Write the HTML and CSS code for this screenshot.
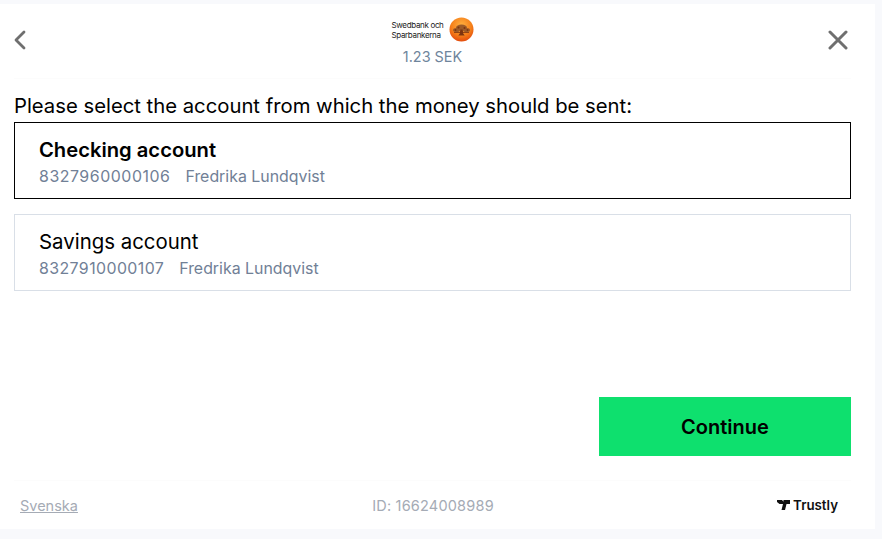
FILE: index.html
```html
<!DOCTYPE html>
<html lang="en">
<head>
<meta charset="utf-8">
<title>Select account</title>
<link rel="stylesheet" href="styles.css">
</head>
<body>
<main class="panel">
  <header class="top">
    <button class="icon-btn back" aria-label="Back">
      <svg width="14" height="20" viewBox="0 0 14 20"><path d="M11 2 3 10 11 18" fill="none" stroke="#6f6f6f" stroke-width="2.800" stroke-linecap="round" stroke-linejoin="round"/></svg>
    </button>
    <div class="merchant">
      <div class="logo">
        <span class="logo-text">Swedbank och<br>Sparbankerna</span>
        <svg class="logo-mark" width="25" height="25" viewBox="0 0 25 25">
          <defs><radialGradient id="sun" cx="50%" cy="32%" r="70%"><stop offset="0" stop-color="#ffb03f"/><stop offset=".6" stop-color="#f5801a"/><stop offset="1" stop-color="#e2480c"/></radialGradient></defs>
          <circle cx="12.500" cy="12.500" r="12" fill="url(#sun)"/>
          <g fill="#9c5a28">
            <ellipse cx="12.500" cy="10.500" rx="5.500" ry="3"/>
            <ellipse cx="7.500" cy="13" rx="3.500" ry="2"/>
            <ellipse cx="17.500" cy="13" rx="3.500" ry="2"/>
          </g>
          <g fill="#7d3410">
            <path d="M11.300 12.500h2.400l.5 4 1.500 2H9.300l1.500-2Z"/>
            <path d="M5 15h15v.8H5Z"/>
            <circle cx="9.500" cy="10.500" r="1"/>
            <circle cx="15.500" cy="11" r="1"/>
            <circle cx="6.500" cy="13" r=".9"/>
            <circle cx="18.500" cy="13" r=".9"/>
          </g>
        </svg>
      </div>
      <div class="amount">1.23 SEK</div>
    </div>
    <button class="icon-btn close" aria-label="Close">
      <svg width="22" height="20" viewBox="0 1 22 20"><path d="M3 3 19 19M19 3 3 19" fill="none" stroke="#6f6f6f" stroke-width="3" stroke-linecap="round"/></svg>
    </button>
  </header>
  <section class="content">
    <h1 class="prompt">Please select the account from which the money should be sent:</h1>
    <div class="accounts">
      <div class="account selected">
        <div class="account-name">Checking account</div>
        <div class="account-meta"><span class="num">8327960000106</span><span>Fredrika Lundqvist</span></div>
      </div>
      <div class="account">
        <div class="account-name">Savings account</div>
        <div class="account-meta"><span class="num">8327910000107</span><span>Fredrika Lundqvist</span></div>
      </div>
    </div>
    <div class="actions"><button class="continue">Continue</button></div>
  </section>
  <footer class="foot">
    <a class="lang" href="#">Svenska</a>
    <span class="id">ID: 16624008989</span>
    <span class="brand">
      <svg width="13" height="10" viewBox="0 0 13 10"><path d="M0 0h5l1.500 1.800V0H13v4H9.500L8 10H4.500L6 4H2.500L0 2Z" fill="#111"/></svg>
      <span>Trustly</span>
    </span>
  </footer>
</main>
</body>
</html>
```
FILE: styles.css
```css
* { box-sizing: border-box; }
html, body { height: 100%; }
body {
  margin: 0;
  background: #f8f9fc;
  font-family: Inter, "Liberation Sans", sans-serif;
  color: #000;
  overflow: hidden;
}
.panel {
  width: 875px;
  height: 525px;
  margin-top: 4px;
  background: #fff;
  padding: 0 24px 0 14px;
  display: flex;
  flex-direction: column;
}
.top {
  height: 75px;
  flex: none;
  display: flex;
  justify-content: space-between;
  align-items: flex-start;
  border-bottom: 1px solid #fcfcfc;
  padding-top: 12px;
}
.icon-btn {
  border: 0;
  background: none;
  padding: 14px 0 0;
  display: flex;
}
.back { margin-left: -1px; }
.close { margin-right: 2px; }
.merchant {
  display: flex;
  flex-direction: column;
  align-items: center;
  gap: 6px;
  padding-top: 1px;
  margin-left: 11px;
}
.logo { display: flex; align-items: center; gap: 5px; }
.logo-text { font-size: 8px; line-height: 10px; letter-spacing: -.33px; color: #222; }
.amount { font-size: 14.400px; line-height: 18px; color: #6f859c; }
.content {
  flex: 1;
  display: flex;
  flex-direction: column;
}
.prompt {
  margin: 0;
  padding-top: 11px;
  font-size: 20.270px;
  font-weight: 400;
  line-height: 32px;
}
.accounts { display: flex; flex-direction: column; gap: 15px; }
.account {
  width: 837px;
  height: 77px;
  border: 1px solid #d9dfe7;
  padding: 13px 24px 0;
}
.account.selected { border-color: #000; }
.account-name { font-size: 20.400px; line-height: 28px; }
.selected .account-name { font-size: 20.200px; font-weight: 600; }
.account-meta {
  display: flex;
  gap: 15px;
  padding-top: 1px;
  font-size: 15.900px;
  line-height: 24px;
  color: #718096;
}
.num { letter-spacing: .42px; }
.selected .num { letter-spacing: .55px; }
.actions { display: flex; justify-content: flex-end; padding-top: 106px; }
.continue {
  width: 252px;
  height: 59px;
  border: 0;
  background: #0ee06e;
  font: 600 20px Inter, "Liberation Sans", sans-serif;
  color: #000;
}
.foot {
  height: 49px;
  flex: none;
  display: grid;
  grid-template-columns: 1fr auto 1fr;
  align-items: center;
  border-top: 1px solid #fcfcfc;
  padding: 0 13px 0 6px;
  font-size: 14.500px;
  color: #a5abb5;
}
.lang { color: #a5abb5; justify-self: start; }
.id { color: #a5abb5; letter-spacing: .2px; margin-left: 8px; }
.brand {
  justify-self: end;
  display: flex;
  align-items: center;
  gap: 3px;
  font-size: 13.300px;
  font-weight: 600;
  color: #111;
}
```
